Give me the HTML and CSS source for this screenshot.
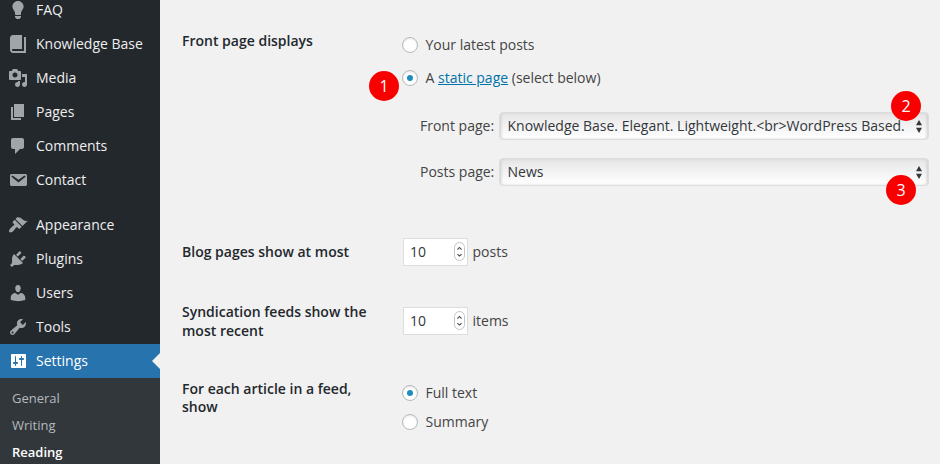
FILE: index.html
```html
<!DOCTYPE html>
<html lang="en">
<head>
<meta charset="utf-8">
<title>Reading Settings</title>
<link rel="stylesheet" href="styles.css">
</head>
<body>
<div class="layout">
  <nav class="sidebar">
    <ul class="menu">
      <li class="item"><svg class="icon" viewBox="0 0 20 20"><path d="M10 1c3.11 0 5.63 2.52 5.63 5.62 0 1.84-2.03 4.58-2.03 4.58-.33.44-.6 1.25-.6 1.8v1c0 .55-.45 1-1 1H8c-.55 0-1-.45-1-1v-1c0-.55-.27-1.36-.6-1.8 0 0-2.02-2.74-2.02-4.58C4.38 3.52 6.89 1 10 1zM7 16.87V16h6v.87c0 .62-.13 1.13-.75 1.13H12c0 .62-.4 1-1.02 1h-2c-.61 0-.98-.38-.98-1h-.25c-.62 0-.75-.51-.75-1.13z"/></svg><span>FAQ</span></li>
      <li class="item"><svg class="icon" viewBox="0 0 20 20"><path d="M16 3h2v16H5c-1.66 0-3-1.34-3-3V4c0-1.66 1.34-3 3-3h9v14H5c-.55 0-1 .45-1 1s.45 1 1 1h11V3z"/></svg><span>Knowledge Base</span></li>
      <li class="item"><svg class="icon" viewBox="0 0 20 20"><path d="M13 11V4c0-.55-.45-1-1-1h-1.67L9 1H5L3.67 3H2c-.55 0-1 .45-1 1v7c0 .55.45 1 1 1h10c.55 0 1-.45 1-1zM7 4.5c1.38 0 2.5 1.12 2.5 2.5S8.38 9.5 7 9.5 4.5 8.38 4.5 7 5.62 4.5 7 4.5zM14 6h5v10.5c0 1.38-1.12 2.5-2.5 2.5S14 17.88 14 16.5s1.12-2.5 2.5-2.5c.17 0 .34.02.5.05V9h-3V6zm-4 8.05V13h2v3.5c0 1.38-1.12 2.5-2.5 2.5S7 17.88 7 16.5 8.12 14 9.5 14c.17 0 .34.02.5.05z"/></svg><span>Media</span></li>
      <li class="item"><svg class="icon" viewBox="0 0 20 20"><path d="M6 15V2h10v13H6zm-1 1h8v2H3V5h2v11z"/></svg><span>Pages</span></li>
      <li class="item"><svg class="icon" viewBox="0 0 20 20"><path d="M5 2h9c1.1 0 2 .9 2 2v7c0 1.1-.9 2-2 2h-2l-5 5v-5H5c-1.1 0-2-.9-2-2V4c0-1.1.9-2 2-2z"/></svg><span>Comments</span></li>
      <li class="item"><svg class="icon" viewBox="0 0 20 20"><path d="M3.87 4h13.25C18.37 4 19 4.59 19 5.79v8.42c0 1.19-.63 1.79-1.88 1.79H3.87c-1.25 0-1.88-.6-1.88-1.79V5.79c0-1.2.63-1.79 1.88-1.79zm6.62 8.6l6.74-5.53c.24-.2.43-.66.13-1.07-.29-.41-.82-.42-1.17-.17l-5.7 3.86L4.8 5.83c-.35-.25-.88-.24-1.17.17-.3.41-.11.87.13 1.07z"/></svg><span>Contact</span></li>
      <li class="item group-start"><svg class="icon" viewBox="0 0 20 20"><path d="M14.48 11.06L7.41 3.99l1.5-1.5c.5-.56 2.3-.47 3.51.32 1.21.8 1.43 1.28 2.91 2.1 1.18.64 2.45 1.26 4.45.85zm-.71.71L6.7 4.7 4.93 6.47c-.39.39-.39 1.02 0 1.41l1.06 1.06c.39.39.39 1.03 0 1.42-.6.6-1.43 1.11-2.21 1.69-.35.26-.7.53-1.01.84C1.43 14.23.4 16.08 1.4 17.07c.99 1 2.84-.03 4.18-1.36.31-.31.58-.66.85-1.02.57-.78 1.08-1.61 1.69-2.21.39-.39 1.02-.39 1.41 0l1.06 1.06c.39.39 1.02.39 1.41 0z"/></svg><span>Appearance</span></li>
      <li class="item"><svg class="icon" viewBox="0 0 20 20"><path d="M13.11 4.36L9.87 7.6 8 5.73l3.24-3.24c.35-.34 1.05-.2 1.56.32.52.51.66 1.21.31 1.55zm-8 1.77l.91-1.12 9.01 9.01-1.19.84c-.71.71-2.63 1.16-3.82 1.16H6.14L4.9 17.26c-.59.59-1.54.59-2.12 0-.59-.58-.59-1.53 0-2.12l1.24-1.24v-3.88c0-1.13.4-3.19 1.09-3.89zm7.26 3.97l3.24-3.24c.34-.35 1.04-.21 1.55.31.52.51.66 1.21.31 1.55l-3.24 3.25z"/></svg><span>Plugins</span></li>
      <li class="item"><svg class="icon" viewBox="0 0 20 20"><path d="M10 9.25c-2.27 0-2.73-3.44-2.73-3.44C7 4.02 7.82 2 9.97 2c2.16 0 2.98 2.02 2.71 3.81 0 0-.41 3.44-2.68 3.44zm0 2.57L12.72 10c2.39 0 4.52 2.33 4.52 4.53v2.49s-3.65 1.13-7.24 1.13c-3.65 0-7.24-1.13-7.24-1.13v-2.49c0-2.25 1.94-4.48 4.47-4.48z"/></svg><span>Users</span></li>
      <li class="item"><svg class="icon" viewBox="0 0 20 20"><path d="M16.68 9.77c-1.34 1.34-3.3 1.67-4.95.99l-5.41 6.52c-.99.99-2.59.99-3.58 0s-.99-2.59 0-3.57l6.52-5.42c-.68-1.65-.35-3.61.99-4.95 1.28-1.28 3.12-1.62 4.72-1.06l-2.89 2.89 2.82 2.82 2.86-2.87c.53 1.58.18 3.39-1.08 4.65zM3.81 16.21c.4.39 1.04.39 1.43 0 .4-.4.4-1.04 0-1.43-.39-.4-1.03-.4-1.43 0-.39.39-.39 1.03 0 1.43z"/></svg><span>Tools</span></li>
      <li class="item current"><svg class="icon" viewBox="0 0 20 20"><path d="M18 16V4c0-.55-.45-1-1-1H4c-.55 0-1 .45-1 1v12c0 .55.45 1 1 1h13c.55 0 1-.45 1-1zM8 11h1c.55 0 1 .45 1 1s-.45 1-1 1H8v1.5c0 .28-.22.5-.5.5s-.5-.22-.5-.5V13H6c-.55 0-1-.45-1-1s.45-1 1-1h1V5.500c0-.28.22-.5.5-.5s.5.22.5.5V11zm5-2h-1c-.55 0-1-.45-1-1s.45-1 1-1h1V5.500c0-.28.22-.5.5-.5s.5.22.5.5V7h1c.55 0 1 .45 1 1s-.45 1-1 1h-1v5.500c0 .28-.22.5-.5.5s-.5-.22-.5-.5V9z"/></svg><span>Settings</span></li>
    </ul>
    <ul class="submenu">
      <li>General</li>
      <li>Writing</li>
      <li class="active">Reading</li>
    </ul>
  </nav>
  <main class="content">
    <section class="row row-front">
      <h2 class="label">Front page displays</h2>
      <div class="field">
        <div class="option"><span class="radio"></span><span>Your latest posts</span></div>
        <div class="option"><span class="radio checked"></span><span>A <a class="link">static page</a> (select below)</span><span class="badge badge-one">1</span></div>
        <div class="pick"><span class="pick-label">Front page:</span><div class="select"><span>Knowledge Base. Elegant. Lightweight.&lt;br&gt;WordPress Based.</span><svg class="arrows" viewBox="0 0 6 13"><path d="M0 5.200L3 0l3 5.200zM0 7.800h6L3 13z"/></svg><span class="badge badge-two">2</span></div></div>
        <div class="pick"><span class="pick-label">Posts page:</span><div class="select"><span>News</span><svg class="arrows" viewBox="0 0 6 13"><path d="M0 5.200L3 0l3 5.200zM0 7.800h6L3 13z"/></svg><span class="badge badge-three">3</span></div></div>
      </div>
    </section>
    <section class="row row-number">
      <h2 class="label">Blog pages show at most</h2>
      <div class="number-field"><div class="number"><span>10</span><span class="stepper"><svg viewBox="0 0 10 18"><path d="M2.700 6.800L5 4.500l2.300 2.300M2.700 11.800L5 14.100l2.300-2.300"/></svg></span></div><span>posts</span></div>
    </section>
    <section class="row row-number">
      <h2 class="label">Syndication feeds show the most recent</h2>
      <div class="number-field"><div class="number"><span>10</span><span class="stepper"><svg viewBox="0 0 10 18"><path d="M2.700 6.800L5 4.500l2.300 2.300M2.700 11.800L5 14.100l2.300-2.300"/></svg></span></div><span>items</span></div>
    </section>
    <section class="row row-feed">
      <h2 class="label">For each article in a feed, show</h2>
      <div class="field">
        <div class="option"><span class="radio checked"></span><span>Full text</span></div>
        <div class="option"><span class="radio"></span><span>Summary</span></div>
      </div>
    </section>
  </main>
</div>
</body>
</html>
```
FILE: styles.css
```css
* { box-sizing: border-box; }
body {
  margin: 0;
  height: 464px;
  overflow: hidden;
  background: #f1f1f1;
  color: #444;
  font: 14px/18px "Open Sans", sans-serif;
}
ul { margin: 0; padding: 0; list-style: none; }
.layout { display: flex; height: 464px; }
.sidebar { width: 160px; flex: none; background: #23282d; overflow: hidden; }
.menu { margin-top: -7px; color: #eee; }
.item { display: flex; align-items: center; gap: 8px; height: 34px; padding-left: 8px; }
.icon { width: 20px; height: 20px; fill: #a0a5aa; }
.group-start { margin-top: 11px; }
.current { background: #2773ad; color: #fff; }
.current .icon { fill: #fff; }
.current::after {
  content: "";
  margin-left: auto;
  border: 8px solid transparent;
  border-right-color: #f1f1f1;
  border-left: 0;
}
.submenu { height: 100px; padding: 7px 12px; background: #32373c; color: #b4b9be; font-size: 13px; line-height: 27px; }
.active { color: #fff; font-weight: 600; }

.content { flex: 1; padding: 32px 11px 0 22px; }
.row { display: grid; grid-template-columns: 220px 1fr; }
.row-front { height: 186px; }
.row-number { height: 69px; align-items: center; }
.row-feed { padding-top: 24px; }
.label { margin: 0; padding-right: 30px; color: #23282d; font-size: 14px; font-weight: 600; line-height: 18.2px; }
.option { display: flex; align-items: center; gap: 7.5px; height: 29px; position: relative; }
.row-front .option { height: 33px; }
.row-front .field { margin-top: -4px; }
.row-feed .field { margin-top: -2px; }
.radio { display: grid; place-items: center; width: 16px; height: 16px; border: 1px solid #b4b9be; border-radius: 50%; background: #fff; box-shadow: inset 0 1px 2px rgba(0,0,0,.1); }
.checked::before { content: ""; width: 6px; height: 6px; border-radius: 50%; background: #1e8cbe; }
.link { color: #0073aa; text-decoration: underline; }
.pick { display: flex; align-items: center; height: 28px; margin: 18px 0 0 18px; }
.pick-label { width: 79px; flex: none; white-space: nowrap; }
.select {
  position: relative;
  display: flex;
  align-items: center;
  justify-content: space-between;
  flex: 1;
  height: 28px;
  padding: 0 6px 0 7.5px;
  border: 1px solid #ddd;
  border-radius: 4px;
  background: linear-gradient(#e6e6e6, #fff);
  box-shadow: inset 2px 0 3px -1px #ccc, inset -2px 0 3px -1px #ccc;
  color: #32373c;
  white-space: nowrap;
}
.arrows { width: 6px; height: 13px; fill: #32373c; }
.badge {
  position: absolute;
  width: 30px;
  height: 30px;
  border-radius: 50%;
  background: #f80000;
  color: #fff;
  font-size: 16px;
  line-height: 30px;
  text-align: center;
}
.badge-one { left: -33px; top: 10px; }
.badge-two { right: 7px; top: -22px; }
.badge-three { right: 12px; top: 16px; }
.number-field { display: flex; align-items: center; gap: 4.5px; padding-left: 1px; margin-top: -2px; }
.number { display: flex; align-items: center; justify-content: space-between; width: 65px; height: 28px; padding: 0 2px 0 6px; border: 1px solid #ddd; background: #fff; color: #32373c; }
.number > span:first-child { padding-top: 1px; }
.stepper { width: 11px; height: 19px; border: 1px solid #c4c4c4; border-radius: 6px; }
.stepper svg { display: block; width: 9px; height: 17px; fill: none; stroke: #444; stroke-width: 1.2; }
```
